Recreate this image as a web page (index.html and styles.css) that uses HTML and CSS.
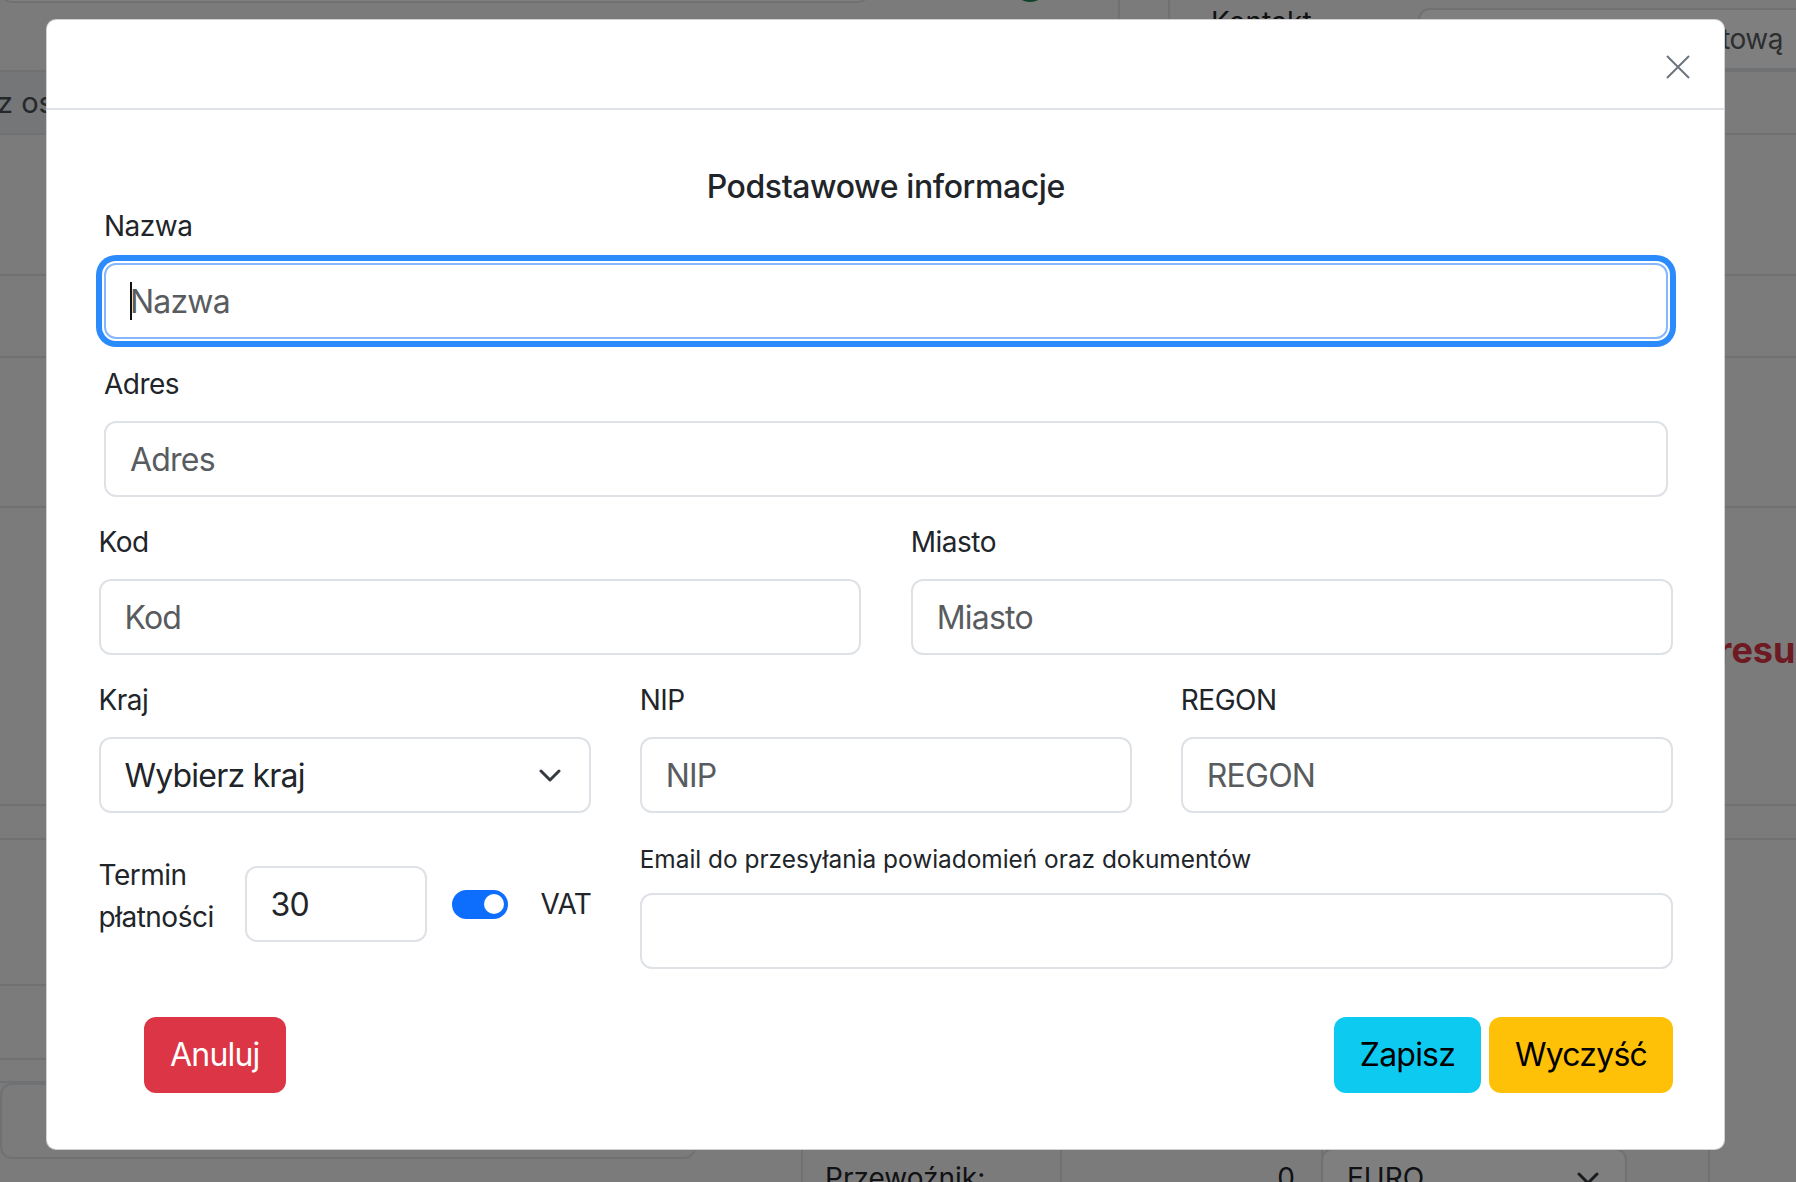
FILE: index.html
```html
<!DOCTYPE html>
<html lang="pl">
<head>
<meta charset="utf-8">
<title>Podstawowe informacje</title>
<link rel="stylesheet" href="styles.css">
</head>
<body>
<div class="page">
  <div class="bg-row row-a">
    <div class="bg-topbox"></div>
    <div class="bg-circle"></div>
    <div class="bg-vline vl1"></div>
    <div class="bg-vline vl2"></div>
    <div class="bg-kontakt">Kontakt</div>
    <div class="bg-input">Adres pocztową</div>
  </div>
  <div class="bg-row row-b"><div class="bg-cell-dark">z osobą kontaktową</div></div>
  <div class="bg-row row-c"></div>
  <div class="bg-row row-d"></div>
  <div class="bg-row row-e"></div>
  <div class="bg-row row-f"><div class="bg-red">adresu</div></div>
  <div class="bg-row row-g"></div>
  <div class="row-h">
    <div class="bg-left">
      <div class="bl bl1"></div>
      <div class="bl bl2"></div>
      <div class="bl bl3"></div>
      <div class="bg-box"></div>
    </div>
    <div class="bg-table">
      <div class="bt-cell bt-label">Przewoźnik:</div>
      <div class="bt-cell bt-num">0</div>
      <div class="bt-cell bt-sel">
        <div class="bt-select">EURO
          <svg class="bt-chev" width="22" height="13" viewBox="0 0 22 13"><path d="M2 2l9 9 9-9" fill="none" stroke="#343a40" stroke-width="3" stroke-linecap="round" stroke-linejoin="round"/></svg>
        </div>
      </div>
      <div class="bt-cell bt-last"></div>
    </div>
  </div>
</div>

<div class="backdrop"></div>

<div class="modal">
  <div class="modal-header">
    <button class="btn-close" type="button" aria-label="Zamknij">
      <svg width="24" height="24" viewBox="0 0 24 24"><path d="M1 1L23 23M23 1L1 23" fill="none" stroke="#6c757d" stroke-width="2"/></svg>
    </button>
  </div>
  <div class="modal-body">
    <h5 class="title">Podstawowe informacje</h5>

    <div class="inset">
      <div class="field">
        <label class="label">Nazwa</label>
        <div class="input-wrap">
          <input class="form-control is-focus" type="text" placeholder="Nazwa">
          <span class="caret"></span>
        </div>
      </div>
      <div class="field">
        <label class="label">Adres</label>
        <input class="form-control" type="text" placeholder="Adres">
      </div>
    </div>

    <div class="grid2">
      <div class="field">
        <label class="label">Kod</label>
        <input class="form-control" type="text" placeholder="Kod">
      </div>
      <div class="field">
        <label class="label">Miasto</label>
        <input class="form-control" type="text" placeholder="Miasto">
      </div>
    </div>

    <div class="grid3">
      <div class="field">
        <label class="label">Kraj</label>
        <div class="select-wrap">
          <select class="form-select"><option>Wybierz kraj</option></select>
          <svg class="chev" width="22" height="13" viewBox="0 0 22 13"><path d="M2 2l9 9 9-9" fill="none" stroke="#343a40" stroke-width="3" stroke-linecap="round" stroke-linejoin="round"/></svg>
        </div>
      </div>
      <div class="field">
        <label class="label">NIP</label>
        <input class="form-control" type="text" placeholder="NIP">
      </div>
      <div class="field">
        <label class="label">REGON</label>
        <input class="form-control" type="text" placeholder="REGON">
      </div>
    </div>

    <div class="grid3 last-row">
      <div class="termin">
        <label class="label termin-label">Termin płatności</label>
        <input class="form-control termin-input" type="text" value="30">
        <span class="switch"><span class="knob"></span></span>
        <span class="label vat">VAT</span>
      </div>
      <div class="email">
        <label class="email-label">Email do przesyłania powiadomień oraz dokumentów</label>
        <input class="form-control" type="text">
      </div>
    </div>

    <div class="actions">
      <button class="btn btn-danger" type="button">Anuluj</button>
      <div class="actions-right">
        <button class="btn btn-info" type="button">Zapisz</button>
        <button class="btn btn-warning" type="button">Wyczyść</button>
      </div>
    </div>
  </div>
</div>
</body>
</html>
```

FILE: styles.css
```css
* { box-sizing: border-box; }
html, body { margin: 0; padding: 0; }
body {
  width: 1796px;
  height: 1182px;
  overflow: hidden;
  position: relative;
  background: #f6f6f6;
  font-family: Inter, "Noto Sans", "Liberation Sans", sans-serif;
  color: #212529;
}

/* ---------- background page (under the backdrop) ---------- */
.page { display: flex; flex-direction: column; width: 1796px; height: 1182px; overflow: hidden; }
.bg-row { display: flex; border-bottom: 2px solid #dee2e6; flex-shrink: 0; }
.row-a { height: 72px; align-items: flex-start; }
.row-b { height: 63px; }
.row-c { height: 141px; }
.row-d { height: 82px; }
.row-e { height: 150px; }
.row-f { height: 298px; }
.row-g { height: 34px; }
.row-h { display: flex; align-items: flex-start; flex: 1; }

.bg-topbox {
  width: 870px; height: 63px; margin-top: -60px; flex-shrink: 0;
  border: 2px solid #dee2e6; border-radius: 12px; background: #fff;
}
.bg-circle {
  width: 36px; height: 36px; margin-left: 142px; margin-top: -34px; flex-shrink: 0;
  border: 3px solid #198754; border-radius: 50%;
}
.bg-vline { width: 2px; align-self: stretch; background: #dee2e6; flex-shrink: 0; }
.vl1 { margin-left: 70px; }
.vl2 { margin-left: 48px; }
.bg-kontakt { margin-left: 41px; margin-top: 1px; font-size: 28px; line-height: 42px; flex-shrink: 0; }
.bg-input {
  margin-left: auto; margin-right: -22px; margin-top: 8px;
  width: 400px; height: 62px; flex-shrink: 0;
  border: 2px solid #dee2e6; border-radius: 12px; background: #fff;
  font-size: 28px; line-height: 58px; color: #595c5f; letter-spacing: -0.5px;
  text-align: right; padding-right: 33px; white-space: nowrap; overflow: hidden;
}
.bg-cell-dark {
  width: 420px; background: #e9ecef; font-size: 29px; line-height: 61px;
  color: #495057; white-space: nowrap; overflow: hidden; text-indent: -3px;
}
.bg-red {
  margin-left: 1674px; padding-top: 120px; font-size: 36px; font-weight: 700;
  color: #dc3545; white-space: nowrap;
}
.bg-left { width: 696px; flex-shrink: 0; display: flex; flex-direction: column; }
.bl { border-bottom: 2px solid #dee2e6; }
.bl1 { height: 146px; }
.bl2 { height: 74px; }
.bl3 { height: 23px; }
.bg-box { height: 76px; border: 2px solid #dee2e6; border-radius: 12px; }
.bg-table { display: flex; margin-left: 105px; margin-top: 300px; height: 80px; flex-shrink: 0; }
.bt-cell { border-left: 2px solid #dee2e6; height: 80px; font-size: 28px; line-height: 42px; padding-top: 17px; }
.bt-label { width: 259px; padding-left: 22px; }
.bt-num { width: 261px; text-align: right; padding-right: 26px; }
.bt-sel { width: 387px; padding-top: 8px; }
.bt-select {
  position: relative; width: 306px; height: 72px; margin-left: -2px;
  border: 2px solid #dee2e6; border-radius: 12px; padding: 7px 0 0 24px; background: #fff;
}
.bt-chev { position: absolute; left: 254px; top: 22px; }
.bt-last { width: 100px; }

.backdrop { position: absolute; inset: 0; background: rgba(0, 0, 0, 0.5); }

/* ---------- modal ---------- */
.modal {
  position: absolute; left: 46px; top: 19px;
  width: 1679px; height: 1131px;
  background: #fff;
  border: 1px solid rgba(0, 0, 0, 0.175);
  border-radius: 10px;
  display: flex; flex-direction: column;
}
.modal-header {
  height: 90px; flex-shrink: 0;
  border-bottom: 2px solid #dee2e6;
  display: flex; justify-content: flex-end; align-items: flex-start;
  padding: 35px 34px 0 0;
}
.btn-close { border: 0; background: transparent; padding: 0; width: 24px; height: 24px; display: block; }
.btn-close svg { display: block; }

.modal-body { padding: 58px 51px 0 51.5px; }
.title {
  margin: 0; text-align: center;
  font-size: 32px; line-height: 37px; font-weight: 500; color: #212529;
  letter-spacing: -0.4px;
}
.inset { padding: 0 5.5px; }
.field { margin-bottom: 24px; min-width: 0; }
.label {
  display: block; font-size: 28px; line-height: 42px; margin-bottom: 16px;
  color: #212529; letter-spacing: -0.5px;
}

.form-control, .form-select {
  display: block; width: 100%; height: 76px;
  border: 2px solid #dee2e6; border-radius: 12px;
  padding: 0 24px; background: #fff;
  font-family: inherit; font-size: 32px; color: #212529;
  letter-spacing: -0.8px;
  outline: none;
}
.form-control::placeholder { color: #595c5f; opacity: 1; }
.is-focus {
  border-color: #86b7fe;
  box-shadow: 0 0 0 2px #fff, 0 0 0 8px #2b8bfd;
}
.input-wrap { position: relative; }
.caret { position: absolute; left: 26px; top: 19px; width: 2px; height: 38px; background: #111; }

.grid2 { display: grid; grid-template-columns: minmax(0, 1fr) minmax(0, 1fr); column-gap: 50px; }
.grid3 { display: grid; grid-template-columns: repeat(3, minmax(0, 1fr)); column-gap: 49px; }

.select-wrap { position: relative; }
.form-select { appearance: none; -webkit-appearance: none; }
.chev { position: absolute; right: 30px; top: 32px; pointer-events: none; }

.last-row { margin-top: 4px; }
.termin {
  display: flex; align-items: center; margin-top: 25px; height: 76px; min-width: 0;
}
.termin-label { width: 146px; flex-shrink: 0; margin-bottom: 16px; }
.termin-input { width: 182px; flex-shrink: 0; }
.switch {
  position: relative; display: block; flex-shrink: 0;
  width: 56px; height: 29px; margin-left: 25px;
  background: #0d6efd; border-radius: 15px;
}
.knob {
  position: absolute; right: 4px; top: 4.5px;
  width: 20px; height: 20px; border-radius: 50%; background: #fff;
}
.vat { margin: 0 0 0 33px; white-space: nowrap; }
.email { grid-column: span 2; min-width: 0; }
.email-label {
  display: block; font-size: 24.4px; line-height: 36px; margin-bottom: 16px; color: #212529;
}

.actions { display: flex; justify-content: space-between; margin-top: 48px; }
.actions-right { display: flex; gap: 8px; }
.btn {
  height: 76px; border: 2px solid transparent; border-radius: 12px;
  padding: 0 24px; font-family: inherit; font-size: 32px; line-height: 1;
  letter-spacing: -0.8px;
}
.btn-danger { background: #dc3545; color: #fff; margin-left: 45.5px; }
.btn-info { background: #0dcaf0; color: #000; }
.btn-warning { background: #ffc107; color: #000; }
```
